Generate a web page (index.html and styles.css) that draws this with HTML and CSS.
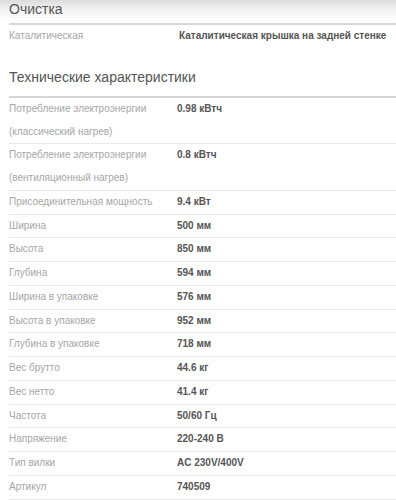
FILE: index.html
```html
<!DOCTYPE html>
<html lang="ru">
<head>
<meta charset="utf-8">
<link rel="stylesheet" href="styles.css">
</head>
<body>
<div class="page">
  <section class="group">
    <h2 class="group-title">Очистка</h2>
    <div class="rows plain">
      <div class="row"><span class="label">Каталитическая</span><span class="value">Каталитическая крышка на задней стенке</span></div>
    </div>
  </section>
  <section class="group">
    <h2 class="group-title">Технические характеристики</h2>
    <div class="rows">
      <div class="row"><span class="label">Потребление электроэнергии (классический нагрев)</span><span class="value">0.98 кВтч</span></div>
      <div class="row"><span class="label">Потребление электроэнергии (вентиляционный нагрев)</span><span class="value">0.8 кВтч</span></div>
      <div class="row"><span class="label">Присоединительная мощность</span><span class="value">9.4 кВт</span></div>
      <div class="row"><span class="label">Ширина</span><span class="value">500 мм</span></div>
      <div class="row"><span class="label">Высота</span><span class="value">850 мм</span></div>
      <div class="row"><span class="label">Глубина</span><span class="value">594 мм</span></div>
      <div class="row"><span class="label">Ширина в упаковке</span><span class="value">576 мм</span></div>
      <div class="row"><span class="label">Высота в упаковке</span><span class="value">952 мм</span></div>
      <div class="row"><span class="label">Глубина в упаковке</span><span class="value">718 мм</span></div>
      <div class="row"><span class="label">Вес брутто</span><span class="value">44.6 кг</span></div>
      <div class="row"><span class="label">Вес нетто</span><span class="value">41.4 кг</span></div>
      <div class="row"><span class="label">Частота</span><span class="value">50/60 Гц</span></div>
      <div class="row"><span class="label">Напряжение</span><span class="value">220-240 В</span></div>
      <div class="row"><span class="label">Тип вилки</span><span class="value">AC 230V/400V</span></div>
      <div class="row"><span class="label">Артикул</span><span class="value">740509</span></div>
    </div>
  </section>
</div>
</body>
</html>
```

FILE: styles.css
```css
html, body {
  margin: 0;
  padding: 0;
  background: #fff;
}
body {
  font-family: "Liberation Sans", Arial, sans-serif;
  background: linear-gradient(to bottom, #dcdcdc 0px, #f3f3f3 10px, #ffffff 22px);
  background-repeat: no-repeat;
  min-height: 500px;
}
.page {
  padding: 0 0 0 9px;
}
.group-title {
  margin: 0;
  font-size: 14px;
  font-weight: normal;
  color: #555;
  line-height: 18px;
  padding-bottom: 5px;
  border-bottom: 2px solid #d6d6d6;
}
.group + .group {
  margin-top: 20px;
}
.group + .group .group-title {
  padding-bottom: 10px;
}
.rows {
  display: flex;
  flex-direction: column;
}
.row {
  display: grid;
  grid-template-columns: 168px 1fr;
  font-size: 10px;
  line-height: 22.75px;
  border-bottom: 1px solid #e8e8e8;
}
.plain .row {
  border-bottom: none;
}
.plain .row .value {
  padding-left: 2px;
}
.label {
  color: #a6a6a6;
  padding-right: 10px;
}
.value {
  color: #555;
  font-weight: bold;
}
```
